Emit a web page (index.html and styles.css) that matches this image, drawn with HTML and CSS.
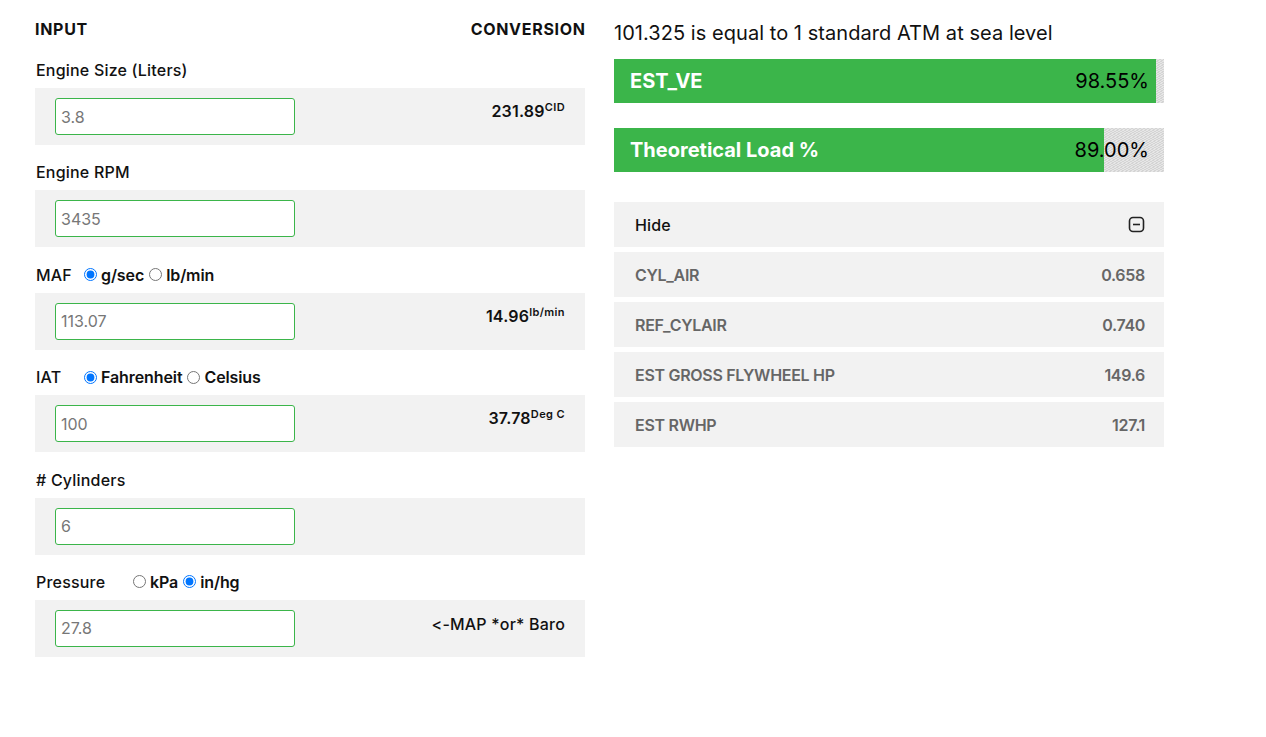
FILE: index.html
```html
<!DOCTYPE html>
<html>
<head>
<meta charset="utf-8">
<link rel="stylesheet" href="styles.css">
</head>
<body>
<div class="page">
  <section class="left">
    <div class="head"><span>INPUT</span><span>CONVERSION</span></div>

    <div class="label">Engine Size (Liters)</div>
    <div class="box">
      <input class="field" type="text" value="3.8">
      <div class="conv">231.89<sup>CID</sup></div>
    </div>

    <div class="label">Engine RPM</div>
    <div class="box">
      <input class="field" type="text" value="3435">
      <div class="conv"></div>
    </div>

    <div class="label"><span class="name">MAF</span><span class="opts"><label><input type="radio" name="maf" checked>g/sec</label><label><input type="radio" name="maf">lb/min</label></span></div>
    <div class="box">
      <input class="field" type="text" value="113.07">
      <div class="conv">14.96<sup>lb/min</sup></div>
    </div>

    <div class="label"><span class="name">IAT</span><span class="opts"><label><input type="radio" name="iat" checked>Fahrenheit</label><label><input type="radio" name="iat">Celsius</label></span></div>
    <div class="box">
      <input class="field" type="text" value="100">
      <div class="conv">37.78<sup>Deg C</sup></div>
    </div>

    <div class="label"># Cylinders</div>
    <div class="box">
      <input class="field" type="text" value="6">
      <div class="conv"></div>
    </div>

    <div class="label"><span class="name long">Pressure</span><span class="opts"><label><input type="radio" name="pr">kPa</label><label><input type="radio" name="pr" checked>in/hg</label></span></div>
    <div class="box">
      <input class="field" type="text" value="27.8">
      <div class="conv plain">&lt;-MAP *or* Baro</div>
    </div>
  </section>

  <section class="right">
    <div class="title">101.325 is equal to 1 standard ATM at sea level</div>
    <div class="bar">
      <div class="fill" style="width:98.55%"></div>
      <span class="bar-name">EST_VE</span>
      <span class="bar-val">98.55%</span>
    </div>
    <div class="bar">
      <div class="fill" style="width:89%"></div>
      <span class="bar-name">Theoretical Load %</span>
      <span class="bar-val">89.00%</span>
    </div>

    <div class="table">
      <div class="row hide"><span>Hide</span>
        <svg class="icon" width="17" height="17" viewBox="0 0 17 17"><rect x="1.5" y="1.5" width="14" height="14" rx="3.5" fill="none" stroke="#222" stroke-width="1.6"/><line x1="5" y1="8.5" x2="12" y2="8.5" stroke="#222" stroke-width="1.6"/></svg>
      </div>
      <div class="row"><span>CYL_AIR</span><span>0.658</span></div>
      <div class="row"><span>REF_CYLAIR</span><span>0.740</span></div>
      <div class="row"><span>EST GROSS FLYWHEEL HP</span><span>149.6</span></div>
      <div class="row"><span>EST RWHP</span><span>127.1</span></div>
    </div>
  </section>
</div>
</body>
</html>
```

FILE: styles.css
```css
* { box-sizing: border-box; }
html, body { margin: 0; background: #fff; }
body {
  font-family: "Inter", "Liberation Sans", sans-serif;
  color: #111;
}
.page {
  display: flex;
  gap: 29px;
  padding: 19px 0 0 35px;
}
.left { width: 550px; }
.right { width: 550px; }

.head {
  display: flex;
  justify-content: space-between;
  font-weight: 700;
  font-size: 16px;
  line-height: 20px;
  margin-bottom: 21px;
  letter-spacing: 0.7px;
  margin-right: -0.7px;
}
.label {
  font-size: 16px;
  line-height: 20px;
  font-weight: 500;
  display: flex;
  align-items: center;
  height: 20px;
  margin-bottom: 8px;
  margin-top: 0;
  padding-left: 1px;
  letter-spacing: 0.2px;
}
.box + .label { margin-top: 17.4px; }
.name { width: 48px; flex: none; }
.name.long { width: 97px; }
.opts { display: inline-flex; align-items: center; font-weight: 600; letter-spacing: -0.1px; }
.opts label { display: inline-flex; align-items: center; }
.opts input { margin: 0 4px 0 0; width: 13px; height: 13px; }
.opts label + label input { margin-left: 5px; }

.box {
  background: #f2f2f2;
  height: 57px;
  padding: 10px 20px 10px 20px;
  display: flex;
  justify-content: space-between;
  align-items: flex-start;
}
.field {
  width: 240px;
  height: 37px;
  border: 1px solid #3bb54a;
  border-radius: 3px;
  background: #fff;
  font-family: inherit;
  font-size: 16px;
  color: #777;
  padding: 0 5px;
  outline: none;
}
.conv {
  font-size: 16px;
  font-weight: 600;
  margin-top: 3px;
  line-height: 20px;
  letter-spacing: 0.2px;
}
.conv sup { font-size: 11px; vertical-align: 6px; line-height: 0; letter-spacing: 0.4px; }
.conv.plain { font-weight: 500; margin-top: 4px; }

.title {
  font-size: 20px;
  line-height: 26px;
  margin-bottom: 13px;
  margin-top: 1px;
  letter-spacing: 0.05px;
}
.bar {
  position: relative;
  height: 44px;
  display: flex;
  align-items: center;
  justify-content: space-between;
  padding: 0 15px 0 16px;
  margin-bottom: 25px;
  background: repeating-linear-gradient(150deg, #e6e6e6 0 1px, #d4d4d4 1px 2px);
  font-size: 20px;
}
.fill {
  position: absolute;
  left: 0; top: 0; bottom: 0;
  background: #3bb54a;
}
.bar-name { position: relative; color: #fff; font-weight: 700; letter-spacing: 0; }
.bar-val { position: relative; color: #000; }

.table { margin-top: 30px; display: flex; flex-direction: column; gap: 5px; }
.row {
  background: #f2f2f2;
  height: 45px;
  display: flex;
  align-items: center;
  justify-content: space-between;
  padding: 0 19px 0 20px;
  font-size: 16px;
  font-weight: 600;
  color: #666;
  letter-spacing: -0.3px;
}
.row span:first-child { padding-left: 1px; }
.row.hide { color: #111; font-weight: 500; letter-spacing: 0.1px; }
.icon { display: block; }
```
